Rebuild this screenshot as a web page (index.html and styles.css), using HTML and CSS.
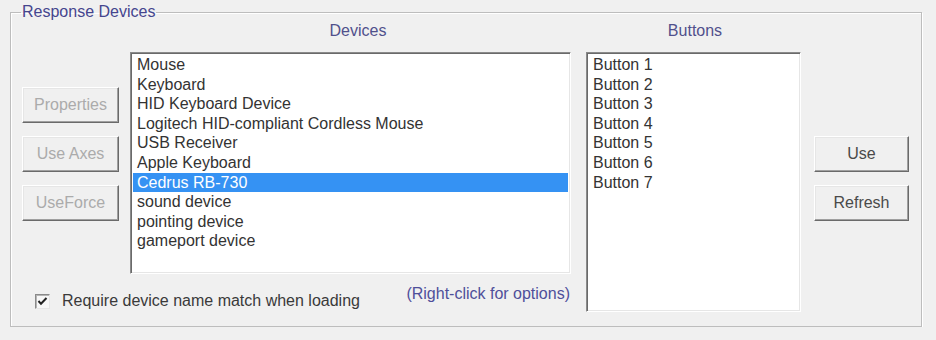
FILE: index.html
```html
<!DOCTYPE html>
<html lang="en">
<head>
    <meta charset="UTF-8">
    <meta name="viewport" content="width=device-width, initial-scale=1.0">
    <title>Response Devices</title>
    <link rel="stylesheet" href="styles.css">
</head>
<body>
    <fieldset class="group">
        <legend>Response Devices</legend>
        <div class="device-grid">
            <div class="col-label devices-label">Devices</div>
            <div class="col-label buttons-label">Buttons</div>

            <div class="side-buttons left">
                <button class="btn" disabled>Properties</button>
                <button class="btn" disabled>Use Axes</button>
                <button class="btn" disabled>UseForce</button>
            </div>

            <ul class="listbox devices-list">
                <li>Mouse</li>
                <li>Keyboard</li>
                <li>HID Keyboard Device</li>
                <li>Logitech HID-compliant Cordless Mouse</li>
                <li>USB Receiver</li>
                <li>Apple Keyboard</li>
                <li class="selected">Cedrus RB-730</li>
                <li>sound device</li>
                <li>pointing device</li>
                <li>gameport device</li>
            </ul>

            <ul class="listbox buttons-list">
                <li>Button 1</li>
                <li>Button 2</li>
                <li>Button 3</li>
                <li>Button 4</li>
                <li>Button 5</li>
                <li>Button 6</li>
                <li>Button 7</li>
            </ul>

            <div class="side-buttons right">
                <button class="btn">Use</button>
                <button class="btn">Refresh</button>
            </div>

            <div class="footer">
                <label class="check">
                    <span class="check-box">
                        <svg width="11" height="11" viewBox="0 0 11 11">
                            <path d="M1.5 5 L4 7.8 L9.5 2" fill="none" stroke="#222" stroke-width="2"/>
                        </svg>
                    </span>
                    Require device name match when loading
                </label>
                <span class="hint">(Right-click for options)</span>
            </div>
        </div>
    </fieldset>
</body>
</html>
```

FILE: styles.css
```css
body {
    margin: 0;
    font-family: "Liberation Sans", Arial, sans-serif;
    font-size: 16px;
    background-color: #f0f0f0;
    color: #333;
}

.group {
    box-sizing: border-box;
    width: 912px;
    margin: 3px 0 0 10px;
    padding: 1px 11px 14px 11px;
    border: 1px solid #bdbdbd;
    box-shadow: inset 1px 1px 0 #fff, 1px 1px 0 #fff;
}

.group legend {
    margin-left: -1px;
    padding: 0 1px;
    line-height: 18px;
    color: #45458e;
}

.device-grid {
    display: grid;
    grid-template-columns: 108px 456px 228px 95px;
    grid-template-rows: 30px 222px 38px;
}

.col-label {
    line-height: 18px;
    text-align: center;
    color: #50508c;
}

.devices-label {
    grid-column: 2;
    grid-row: 1;
}

.buttons-label {
    grid-column: 3;
    grid-row: 1;
    padding-right: 10px;
}

.side-buttons {
    display: flex;
    flex-direction: column;
    gap: 13px;
}

.side-buttons.left {
    grid-column: 1;
    grid-row: 2;
    padding-top: 35px;
}

.side-buttons.right {
    grid-column: 4;
    grid-row: 2;
    padding-top: 84px;
}

.btn {
    height: 36px;
    padding: 0;
    font-family: inherit;
    font-size: 16px;
    color: #4a4a4a;
    background: #f0f0f0;
    border: 1px solid;
    border-color: #fff #6a6a6a #6a6a6a #fff;
    box-shadow: inset -1px -1px 0 #a0a0a0, inset 1px 1px 0 #e6e6e6;
}

.side-buttons.left .btn {
    width: 97px;
}

.side-buttons.right .btn {
    width: 95px;
}

.btn:disabled {
    color: #ababab;
}

.listbox {
    box-sizing: border-box;
    margin: 0;
    padding: 2px 2px 0;
    list-style: none;
    background: #fff;
    border: 1px solid;
    border-color: #8a8a8a #fff #fff #8a8a8a;
    box-shadow: inset 1px 1px 0 #6a6a6a, inset -1px -1px 0 #e6e6e6;
}

.listbox li {
    line-height: 19.6px;
    padding-left: 4px;
    white-space: nowrap;
}

.listbox li.selected {
    background: #3592f3;
    color: #fff;
}

.devices-list {
    grid-column: 2;
    grid-row: 2;
    width: 441px;
    height: 222px;
}

.buttons-list {
    grid-column: 3;
    grid-row: 2 / 4;
    width: 215px;
    height: 260px;
}

.footer {
    grid-column: 1 / 3;
    grid-row: 3;
    display: flex;
    justify-content: space-between;
    align-items: flex-start;
    padding: 0 16px 0 13px;
    line-height: 18px;
}

.check {
    display: flex;
    align-items: center;
    gap: 12px;
    margin-top: 18px;
    color: #3a3a3a;
}

.check-box {
    box-sizing: border-box;
    width: 15px;
    height: 15px;
    display: flex;
    align-items: center;
    justify-content: center;
    background: #f7f7f7;
    border: 1px solid;
    border-color: #8a8a8a #e6e6e6 #e6e6e6 #8a8a8a;
    box-shadow: inset 1px 1px 0 #b5b5b5;
}

.hint {
    margin-top: 11px;
    color: #4f4f9a;
}
```
